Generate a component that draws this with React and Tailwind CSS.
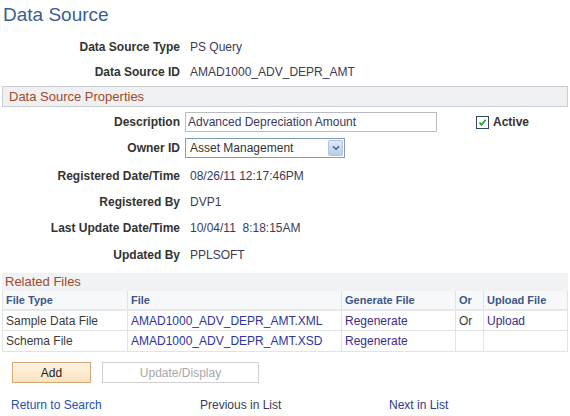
import React from "react";

const F = { fontFamily: '"Liberation Sans", Arial, sans-serif' };

function Row({ label, children, h }) {
  return (
    <div className={`flex items-center ${h}`}>
      <div className="w-[180px] text-right font-bold text-[12px] text-[#333333]">{label}</div>
      <div className="pl-[10px] flex items-center text-[12px] text-[#3c3a55]">{children}</div>
    </div>
  );
}

export default function App() {
  return (
    <div style={F} className="w-[570px] h-[416px] bg-white relative overflow-hidden">
      <div className="h-[34px] pl-[3px] pt-[3px] text-[19px] text-[#3b5d8f] leading-[24px]">Data Source</div>
      <Row label="Data Source Type" h="h-[25px]">PS Query</Row>
      <Row label="Data Source ID" h="h-[25px]">AMAD1000_ADV_DEPR_AMT</Row>
      <div className="mx-[2px] mt-[2px] h-[21px] border border-[#cbcdd0] bg-[#eef0f2] flex items-center pl-[6px] text-[13px] text-[#a2482a]">
        Data Source Properties
      </div>
      <div className="flex items-center h-[24px] mt-[3px]">
        <div className="w-[180px] text-right font-bold text-[12px] text-[#333333]">Description</div>
        <div className="ml-[5px] w-[252px] h-[20px] border border-[#b8bcc2] flex items-center pl-[2px] text-[12px] text-[#3a3a60]">
          Advanced Depreciation Amount
        </div>
        <div className="ml-[39px] flex items-center">
          <div className="w-[13px] h-[13px] border border-[#2f4a6a] bg-white flex items-center justify-center">
            <svg width="9" height="9" viewBox="0 0 9 9">
              <path d="M1.5 4.5 L3.5 6.8 L7.6 1.8" stroke="#2ca02c" strokeWidth="1.8" fill="none" />
            </svg>
          </div>
          <span className="ml-[4px] text-[12px] font-bold text-[#333333]">Active</span>
        </div>
      </div>
      <div className="flex items-center h-[28px]">
        <div className="w-[180px] text-right font-bold text-[12px] text-[#333333]">Owner ID</div>
        <div className="ml-[5px] w-[160px] h-[20px] border border-[#7f9db9] flex items-center text-[12px] text-[#333333] bg-white">
          <span className="pl-[4px] flex-1">Asset Management</span>
          <div className="w-[15px] h-[16px] mr-[1px] rounded-[2px] bg-gradient-to-b from-[#dfe9f8] to-[#b9cbe8] border border-[#b0c2e0] flex items-center justify-center">
            <svg width="8" height="6" viewBox="0 0 8 6">
              <path d="M1 1.2 L4 4.2 L7 1.2" stroke="#4d6185" strokeWidth="1.6" fill="none" />
            </svg>
          </div>
        </div>
      </div>
      <Row label="Registered Date/Time" h="h-[28px]">08/26/11 12:17:46PM</Row>
      <Row label="Registered By" h="h-[24px]">DVP1</Row>
      <Row label="Last Update Date/Time" h="h-[27px]">10/04/11&nbsp;&nbsp;8:18:15AM</Row>
      <Row label="Updated By" h="h-[27px]">PPLSOFT</Row>
      <div className="mt-[5px] mx-[2px] h-[18px] bg-[#f1f2f3] flex items-center pl-[3px] text-[13px] text-[#a2482a]">
        Related Files
      </div>
      <div className="mx-[2px] border-l border-r border-b border-[#e2e3e5]">
        <div className="grid grid-cols-[125px_214px_114px_28px_1fr] h-[20px] bg-[#f7f8f9] border-b-2 border-[#e6e7e9] text-[11px] font-bold text-[#3c5688]">
          <div className="flex items-center pl-[3px] border-r border-[#e2e3e5]">File Type</div>
          <div className="flex items-center pl-[3px] border-r border-[#e2e3e5]">File</div>
          <div className="flex items-center pl-[3px] border-r border-[#e2e3e5]">Generate File</div>
          <div className="flex items-center pl-[3px] border-r border-[#e2e3e5]">Or</div>
          <div className="flex items-center pl-[3px]">Upload File</div>
        </div>
        <div className="grid grid-cols-[125px_214px_114px_28px_1fr] h-[20px] border-b border-[#e2e3e5] text-[12px]">
          <div className="flex items-center pl-[3px] border-r border-[#e2e3e5] text-[#3a3a3a]">Sample Data File</div>
          <div className="flex items-center pl-[3px] border-r border-[#e2e3e5] text-[#2c35a0]">AMAD1000_ADV_DEPR_AMT.XML</div>
          <div className="flex items-center pl-[3px] border-r border-[#e2e3e5] text-[#3a2c8c]">Regenerate</div>
          <div className="flex items-center pl-[3px] border-r border-[#e2e3e5] text-[#3a3a3a]">Or</div>
          <div className="flex items-center pl-[3px] text-[#3a2c8c]">Upload</div>
        </div>
        <div className="grid grid-cols-[125px_214px_114px_28px_1fr] h-[20px] text-[12px]">
          <div className="flex items-center pl-[3px] border-r border-[#e2e3e5] text-[#3a3a3a]">Schema File</div>
          <div className="flex items-center pl-[3px] border-r border-[#e2e3e5] text-[#2c35a0]">AMAD1000_ADV_DEPR_AMT.XSD</div>
          <div className="flex items-center pl-[3px] border-r border-[#e2e3e5] text-[#3a2c8c]">Regenerate</div>
          <div className="border-r border-[#e2e3e5]"></div>
          <div></div>
        </div>
      </div>
      <div className="flex mt-[10px] pl-[12px] gap-[11px]">
        <div className="w-[79px] h-[21px] border border-[#d9a877] bg-gradient-to-b from-[#fdf3e3] to-[#fbe3c0] flex items-center justify-center text-[12px] text-[#222222]">
          Add
        </div>
        <div className="w-[157px] h-[21px] border border-[#cfcfcf] bg-white flex items-center justify-center text-[12px] text-[#a8a8a8]">
          Update/Display
        </div>
      </div>
      <div className="flex mt-[14px] text-[12px] h-[16px] items-center">
        <div className="pl-[11px] w-[200px] text-[#2450b0]">Return to Search</div>
        <div className="w-[189px] text-[#3a3a5a]">Previous in List</div>
        <div className="text-[#2a3a8a]">Next in List</div>
      </div>
    </div>
  );
}
